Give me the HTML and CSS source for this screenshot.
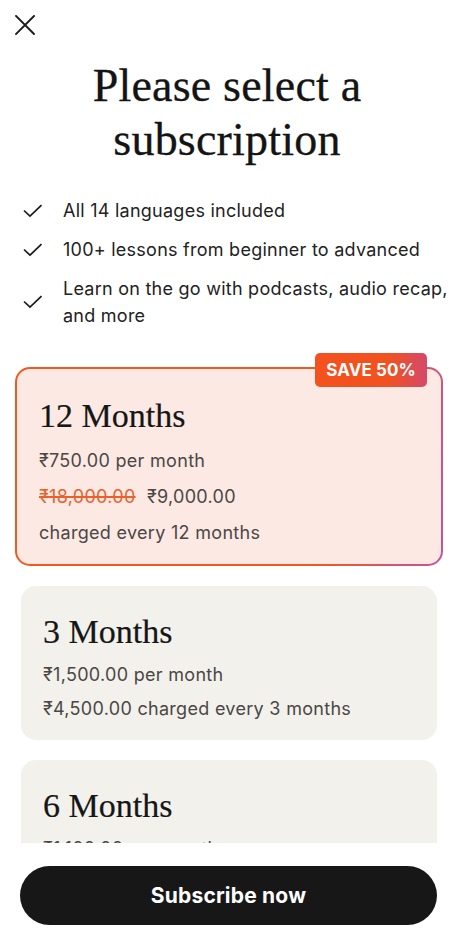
FILE: index.html
```html
<!DOCTYPE html>
<html lang="en">
<head>
<meta charset="utf-8">
<title>Please select a subscription</title>
<link rel="stylesheet" href="styles.css">
</head>
<body>
<div class="app">
  <div class="scroll">
    <div class="topbar">
      <button class="close" aria-label="Close">
        <svg width="20" height="20" viewBox="0 0 20 20"><path d="M1 1L19 19M19 1L1 19" stroke="#1a1a1a" stroke-width="1.9" fill="none" stroke-linecap="square"/></svg>
      </button>
    </div>
    <h1 class="title">Please select a<br>subscription</h1>
    <ul class="features">
      <li><svg class="check" width="20" height="14" viewBox="0 0 20 14"><path d="M1 6.5L7 12.2L18.5 1.2" stroke="#1a1a1a" stroke-width="1.7" fill="none"/></svg><span>All 14 languages included</span></li>
      <li><svg class="check" width="20" height="14" viewBox="0 0 20 14"><path d="M1 6.5L7 12.2L18.5 1.2" stroke="#1a1a1a" stroke-width="1.7" fill="none"/></svg><span>100+ lessons from beginner to advanced</span></li>
      <li><svg class="check" width="20" height="14" viewBox="0 0 20 14"><path d="M1 6.5L7 12.2L18.5 1.2" stroke="#1a1a1a" stroke-width="1.7" fill="none"/></svg><span>Learn on the go with podcasts, audio recap, and more</span></li>
    </ul>
    <div class="plans">
      <div class="plan selected">
        <div class="badge">SAVE 50%</div>
        <div class="plan-name">12 Months</div>
        <div class="plan-line">₹750.00 per month</div>
        <div class="plan-line"><s class="old">₹18,000.00</s> ₹9,000.00</div>
        <div class="plan-line">charged every 12 months</div>
      </div>
      <div class="plan">
        <div class="plan-name">3 Months</div>
        <div class="plan-line">₹1,500.00 per month</div>
        <div class="plan-line">₹4,500.00 charged every 3 months</div>
      </div>
      <div class="plan">
        <div class="plan-name">6 Months</div>
        <div class="plan-line">₹1,100.00 per month</div>
        <div class="plan-line">₹6,600.00 charged every 6 months</div>
      </div>
    </div>
  </div>
  <div class="footer">
    <button class="cta">Subscribe now</button>
  </div>
</div>
</body>
</html>
```

FILE: styles.css
```css
* { box-sizing: border-box; }
html, body { margin: 0; padding: 0; background: #ffffff; }
body {
  font-family: Inter, "Noto Sans", "Liberation Sans", sans-serif;
  color: #1f1f1f;
}
.app {
  width: 454px;
  height: 938px;
  display: flex;
  flex-direction: column;
}
.scroll {
  flex: 1;
  overflow: hidden;
}
.topbar {
  padding: 15px 0 0 15px;
  height: 36px;
}
.close {
  border: 0;
  background: none;
  padding: 0;
  width: 20px;
  height: 20px;
  display: block;
}
.close svg { display: block; }
.title {
  margin: 23px 0 0;
  font-family: "Liberation Serif", "Times New Roman", serif;
  font-weight: 400;
  font-size: 46px;
  line-height: 54px;
  text-align: center;
  color: #141414;
  letter-spacing: 0.2px;
  -webkit-text-stroke: 0.3px #141414;
}
.features {
  list-style: none;
  margin: 30px 0 0;
  padding: 0 2px 0 23px;
  display: flex;
  flex-direction: column;
  gap: 12px;
}
.features li {
  display: flex;
  align-items: center;
  gap: 20px;
  font-size: 18px;
  line-height: 27px;
  letter-spacing: 0.25px;
  color: #222222;
}
.check { flex: none; display: block; }
.plans {
  margin-top: 38px;
  padding: 0 17px 0 21px;
  display: flex;
  flex-direction: column;
  gap: 20px;
}
.plan {
  position: relative;
  background: #f3f1ec;
  border-radius: 15px;
  padding: 26px 22px 19px;
  display: flex;
  flex-direction: column;
  gap: 10px;
}
.plan.selected {
  margin: 0 -6px;
  border: 2.5px solid transparent;
  background:
    linear-gradient(#fde9e3, #fde9e3) padding-box,
    linear-gradient(100deg, #ee5a1f 0%, #ee5a1f 72%, #c2549c 100%) border-box;
  padding: 26.5px 22px 19px;
  gap: 12px;
}
.plan-name {
  font-family: "Liberation Serif", "Times New Roman", serif;
  font-size: 34px;
  line-height: 40px;
  color: #161616;
  margin-bottom: 1px;
  -webkit-text-stroke: 0.2px #161616;
}
.plan-line {
  font-size: 18px;
  line-height: 24px;
  letter-spacing: 0.3px;
  color: #4a4745;
}
.old {
  color: #e8622e;
  text-decoration-thickness: 1.5px;
  margin-right: 6px;
}
.badge {
  position: absolute;
  top: -16px;
  right: 14px;
  height: 34px;
  padding: 0 11px;
  display: flex;
  align-items: center;
  border-radius: 5px;
  background: linear-gradient(90deg, #f4511e 0%, #f1521f 65%, #d4496b 100%);
  color: #ffffff;
  font-weight: 700;
  font-size: 17px;
  letter-spacing: 0.1px;
}
.footer {
  height: 95px;
  padding: 23px 17px 13px 20px;
}
.cta {
  width: 100%;
  height: 59px;
  border: 0;
  border-radius: 30px;
  background: #171717;
  color: #ffffff;
  font-family: Inter, "Noto Sans", "Liberation Sans", sans-serif;
  font-weight: 700;
  font-size: 21px;
  letter-spacing: 0.2px;
}
```
